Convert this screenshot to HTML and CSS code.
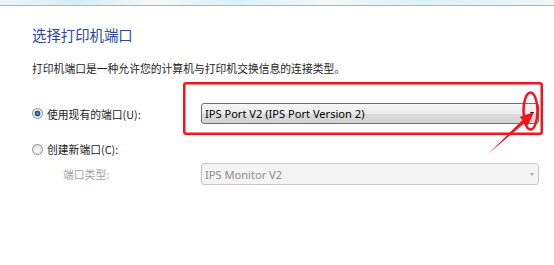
FILE: index.html
```html
<!DOCTYPE html>
<html lang="zh-CN">
<head>
  <meta charset="UTF-8">
  <title>选择打印机端口</title>
  <link rel="stylesheet" href="styles.css">
</head>
<body>

  <div class="topbar"></div>

  <div class="content">
    <h1 class="title">选择打印机端口</h1>
    <p class="desc">打印机端口是一种允许您的计算机与打印机交换信息的连接类型。</p>

    <div class="row row-first">
      <div class="label-col">
        <span class="radio checked"></span>
        <span class="label">使用现有的端口(U):</span>
      </div>
      <div class="combo">
        <span class="combo-text">IPS Port V2 (IPS Port Version 2)</span>
        <span class="combo-arrow"></span>
      </div>
    </div>

    <div class="row row-second">
      <div class="label-col">
        <span class="radio"></span>
        <span class="label">创建新端口(C):</span>
      </div>
    </div>

    <div class="row row-third">
      <div class="label-col">
        <span class="label sub">端口类型:</span>
      </div>
      <div class="combo disabled">
        <span class="combo-text">IPS Monitor V2</span>
        <span class="combo-arrow"></span>
      </div>
    </div>
  </div>

  <!-- red markup drawn over the screenshot -->
  <svg class="markup" width="554" height="265" viewBox="0 0 554 265">
    <rect x="184.25" y="83.25" width="357.5" height="50.5" rx="2" fill="none" stroke="#f5141c" stroke-width="2.5"/>
    <ellipse cx="530.5" cy="111" rx="7" ry="18.5" fill="none" stroke="#f5141c" stroke-width="2.5"/>
    <polygon points="488,154 522.5,120.1 519.7,117 534,112 527.7,125.8 524.9,122.7" fill="#f5141c"/>
  </svg>

</body>
</html>
```

FILE: styles.css
```css
body {
  margin: 0;
  background-color: #fff;
  font-family: "Noto Sans CJK SC", "Noto Sans", sans-serif;
  color: #1e1e1e;
  position: relative;
  height: 265px;
  overflow: hidden;
}

.topbar {
  height: 5px;
  background: linear-gradient(90deg, #eef6fa, #d6edf6 14%, #f6f9fb 28%, #d8f0f8 42%, #f4f8fa 58%, #dcf1f8 76%, #eef6f8);
  border-bottom: 1px solid #b4b4b4;
}

.content {
  padding-left: 32px;
}

.title {
  margin: 19px 0 0 0;
  font-size: 14.4px;
  line-height: 20px;
  font-weight: normal;
  color: #2b47a0;
}

.desc {
  margin: 15px 0 0 0;
  font-size: 10.8px;
  line-height: 16px;
  color: #222;
}

.row {
  display: flex;
  align-items: center;
}

.row-first {
  margin-top: 27px;
  height: 21px;
}

.row-second {
  margin-top: 14px;
  height: 22px;
}

.row-third {
  margin-top: 3px;
  height: 22px;
}

.label-col {
  width: 169px;
  display: flex;
  align-items: center;
  gap: 4px;
}

.label {
  font-size: 10.8px;
  line-height: 14px;
  color: #222;
}

.label.sub {
  padding-left: 31px;
  color: #a3a3a3;
}

.radio {
  width: 11px;
  height: 11px;
  box-sizing: border-box;
  border-radius: 50%;
  border: 1px solid #8f9090;
  background: radial-gradient(circle at 50% 60%, #ffffff 0, #f0f0f0 40%, #d4d4d4 100%);
}

.radio.checked {
  background: radial-gradient(circle at 50% 50%, #6d9fd8 0, #2f64a8 1.6px, #1d4b86 2.6px, #e4e4e4 3.2px, #f7f7f7 100%);
}

.combo {
  width: 338px;
  height: 100%;
  box-sizing: border-box;
  display: flex;
  align-items: center;
  justify-content: space-between;
  padding: 0 4px 0 3px;
  border: 1px solid #707070;
  border-radius: 3px;
  background: linear-gradient(#f6f6f6, #ececec 50%, #dcdcdc 51%, #d2d2d2);
}

.combo-text {
  font-family: "Noto Sans", sans-serif;
  font-size: 11.1px;
  color: #000;
}

.combo-arrow {
  width: 0;
  height: 0;
  border-left: 2.5px solid transparent;
  border-right: 2.5px solid transparent;
  border-top: 3px solid #000;
}

.combo.disabled {
  border-color: #c6c6c6;
  background: #f4f4f4;
}

.combo.disabled .combo-text {
  color: #8d8d8d;
}

.combo.disabled .combo-arrow {
  border-top-color: #a9a9a9;
}

.markup {
  position: absolute;
  left: 0;
  top: 0;
  pointer-events: none;
}
```
